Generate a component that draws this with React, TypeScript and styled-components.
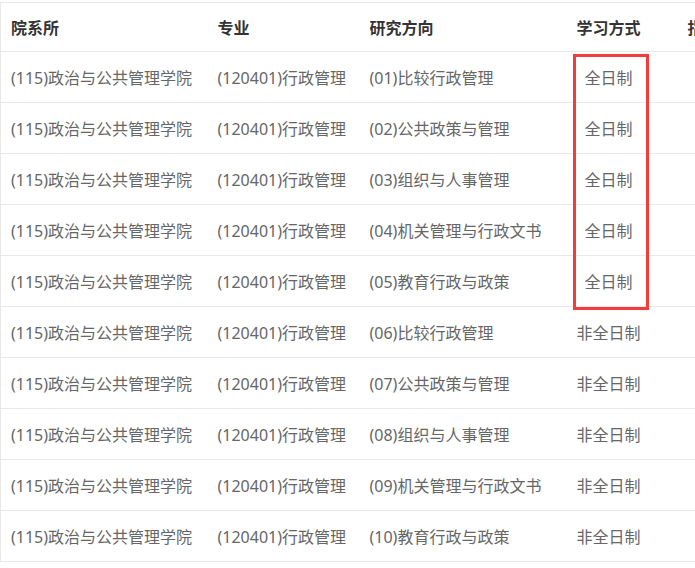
import { createGlobalStyle, styled } from "styled-components";

const GlobalStyle = createGlobalStyle`
    html, body {
        margin: 0;
        padding: 0;
        background: #fff;
        overflow: hidden;
    }
    body {
        font-family: "Noto Sans", "Noto Sans CJK SC", sans-serif;
    }
`;

const directions = [
    "比较行政管理",
    "公共政策与管理",
    "组织与人事管理",
    "机关管理与行政文书",
    "教育行政与政策",
];

const rows = Array.from({ length: 10 }, (_, i) => ({
    dept: "(115)政治与公共管理学院",
    major: "(120401)行政管理",
    direction: `(${String(i + 1).padStart(2, "0")})${directions[i % 5]}`,
    mode: i < 5 ? "全日制" : "非全日制",
    fullTime: i < 5,
}));

export default function App()
{
    return (
        <>
            <GlobalStyle />
            <Page>
                <Table>
                    <colgroup>
                        <col style={{ width: 207 }} />
                        <col style={{ width: 152 }} />
                        <col style={{ width: 207 }} />
                        <col style={{ width: 111 }} />
                        <col style={{ width: 120 }} />
                    </colgroup>
                    <thead>
                        <tr>
                            <Th>院系所</Th>
                            <Th>专业</Th>
                            <Th>研究方向</Th>
                            <Th>学习方式</Th>
                            <Th>指导教师</Th>
                        </tr>
                    </thead>
                    <tbody>
                        {
                            rows.map((row, i) => (
                                <tr key={i}>
                                    <Td>{ row.dept }</Td>
                                    <Td>{ row.major }</Td>
                                    <Td>{ row.direction }</Td>
                                    <Td $indent={row.fullTime}>{ row.mode }</Td>
                                    <Td></Td>
                                </tr>
                            ))
                        }
                    </tbody>
                </Table>
                <Highlight />
            </Page>
        </>
    );
}

const Page = styled.div`
    position: relative;
    width: 695px;
    height: 568px;
    padding-top: 2px;
    box-sizing: border-box;
    overflow: hidden;
`;

const Table = styled.table`
    border-collapse: collapse;
    table-layout: fixed;
    width: 797px;
    border-left: 1px solid #e8e8e8;
    font-size: 16px;
`;

const Th = styled.th`
    height: 48px;
    padding: 0 0 0 10px;
    text-align: left;
    vertical-align: middle;
    font-weight: bold;
    color: #333;
    border-top: 1px solid #e8e8e8;
    border-bottom: 1px solid #e8e8e8;
    white-space: nowrap;
    overflow: hidden;
`;

const Td = styled.td<{ $indent?: boolean }>`
    height: 50px;
    padding: 0 0 0 ${props => props.$indent ? "18px" : "10px"};
    text-align: left;
    vertical-align: middle;
    color: #666;
    border-bottom: 1px solid #e8e8e8;
    white-space: nowrap;
    overflow: hidden;
`;

const Highlight = styled.div`
    position: absolute;
    left: 573px;
    top: 54px;
    width: 76px;
    height: 256px;
    border: 3px solid #f53b3b;
    box-sizing: border-box;
`;
